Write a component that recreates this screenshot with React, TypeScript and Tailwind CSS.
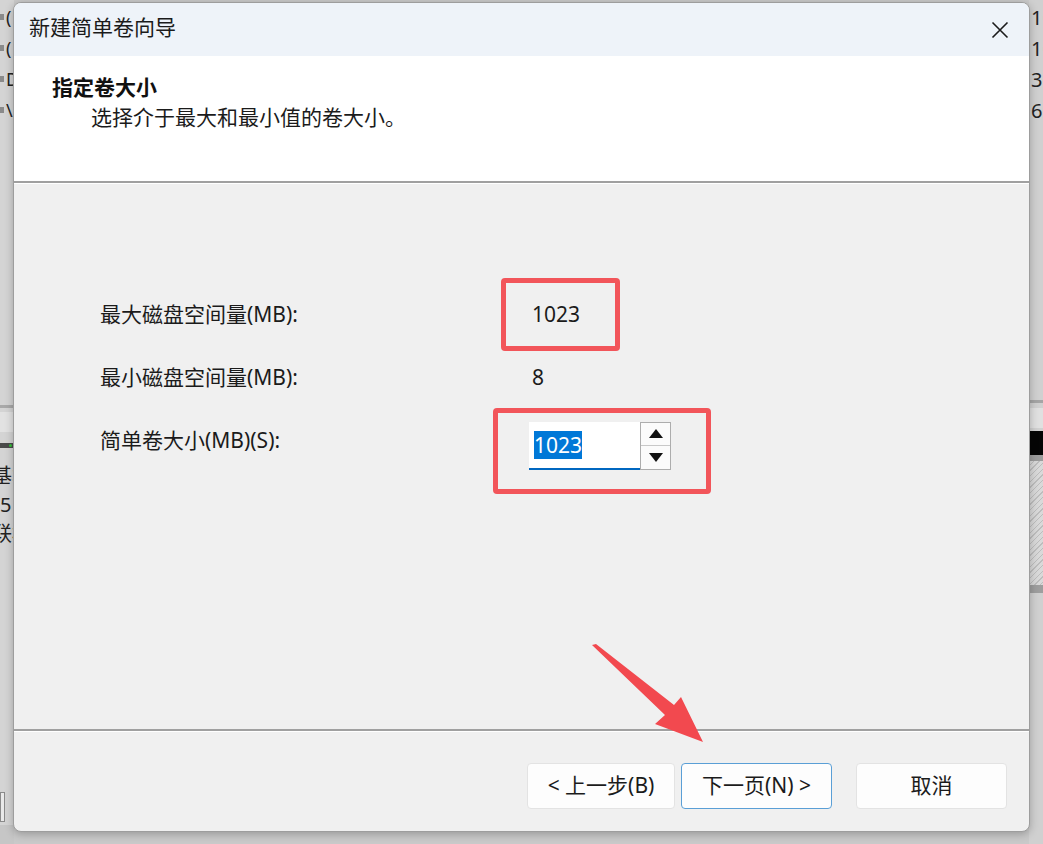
import React from "react";

const font = "font-['Noto_Sans','Noto_Sans_CJK_SC',sans-serif]";

function BackdropLeft() {
  return (
    <div className="absolute inset-y-0 left-0 w-[14px] overflow-hidden whitespace-nowrap bg-[#d4d4d4] text-[18px] leading-none text-[#222]">
      <div className="absolute left-0 top-[8px] flex flex-col gap-[13px]">
        {["(", "(", "D", "\\"].map((c, i) => (
          <div key={i} className="flex h-[18px] items-center gap-[2px]">
            <span className="h-[6px] w-[4px] bg-[#8a8a8a]" />
            <span>{c}</span>
          </div>
        ))}
      </div>
      <div className="absolute left-0 top-[405px] h-[3px] w-full bg-[#a9a9a9]" />
      <div className="absolute left-0 top-[412px] h-[20px] w-full bg-[#e2e2e2]" />
      <div className="absolute left-0 top-[443px] h-[5px] w-full bg-[#4a4a4a]">
        <span className="absolute right-[2px] top-[1px] h-[3px] w-[3px] rounded-full bg-[#35c23a]" />
      </div>
      <div className="absolute left-[-8px] top-[466px] flex w-[60px] flex-col gap-[9px] text-[20px]">
        <span>基本</span>
        <span className="pl-[8px]">5</span>
        <span>联机</span>
      </div>
      <div className="absolute left-0 top-[792px] h-[30px] w-[5px] border border-[#8a8a8a] bg-[#e9e9e9]" />
      <div className="absolute left-0 top-[825px] h-[19px] w-full bg-[#c6c6c6]" />
    </div>
  );
}

function BackdropRight() {
  return (
    <div className="absolute inset-y-0 right-0 w-[14px] overflow-hidden whitespace-nowrap bg-[#d0d0d0] text-[20px] leading-none text-[#222]">
      <div className="absolute left-[2px] top-[8px] flex w-[40px] flex-col gap-[13px]">
        <span className="h-[18px]">1<span className="text-[#c47a1a]">0</span></span>
        <span className="h-[18px]">1<span className="text-[#c47a1a]">0</span></span>
        <span className="h-[18px]">3</span>
        <span className="h-[18px]">6</span>
      </div>
      <div className="absolute left-0 top-[400px] h-[3px] w-full bg-[#a5a5a5]" />
      <div className="absolute left-0 top-[408px] h-[20px] w-full bg-[#e0e0e0]" />
      <div className="absolute left-0 top-[431px] h-[24px] w-full bg-[#050505]" />
      <div className="absolute left-0 top-[455px] h-[6px] w-full bg-[#9c9c9c]" />
      <div className="absolute left-0 top-[461px] h-[124px] w-full bg-[repeating-linear-gradient(135deg,#d9d9d9_0px,#d9d9d9_3px,#bdbdbd_3px,#bdbdbd_4px)]" />
      <div className="absolute left-0 top-[585px] h-[8px] w-full bg-[#9e9e9e]" />
    </div>
  );
}

function Arrow() {
  return (
    <svg className="pointer-events-none absolute left-0 top-0" width="1043" height="844" viewBox="0 0 1043 844">
      <polygon
        points="592,645 596,644 674,705 681,697 703,742 655,724 665,715"
        fill="#f2494f"
      />
    </svg>
  );
}

function Spinner() {
  return (
    <div className="flex h-[48px] w-[31px] flex-col border border-[#adadad] bg-[#f0f0f0]">
      <div className="flex flex-1 items-center justify-center border-b border-[#c8c8c8] bg-[#fbfbfb]">
        <svg width="14" height="9" viewBox="0 0 14 9"><polygon points="7,0 14,9 0,9" fill="#111" /></svg>
      </div>
      <div className="flex flex-1 items-center justify-center bg-[#fbfbfb]">
        <svg width="14" height="9" viewBox="0 0 14 9"><polygon points="0,0 14,0 7,9" fill="#111" /></svg>
      </div>
    </div>
  );
}

export default function App() {
  return (
    <div className={`relative h-[844px] w-[1043px] overflow-hidden bg-[#c9c9c9] ${font}`}>
      <BackdropLeft />
      <BackdropRight />

      <div className="relative ml-[13px] mt-[2px] flex h-[830px] w-[1017px] flex-col overflow-hidden rounded-[8px] border border-[#9d9d9d] bg-[#f0f0f0] shadow-[0_2px_8px_rgba(0,0,0,0.25)]">
        {/* title bar */}
        <div className="flex h-[53px] shrink-0 items-center justify-between bg-[#eef3f9] pl-[15px] pr-[18px]">
          <span className="pb-[3px] text-[21px] text-[#1b1b1b]">新建简单卷向导</span>
          <svg width="18" height="18" viewBox="0 0 18 18" className="mr-[2px]">
            <path d="M1.5 1.5 L16.5 16.5 M16.5 1.5 L1.5 16.5" stroke="#1b1b1b" strokeWidth="1.6" />
          </svg>
        </div>

        {/* header */}
        <div className="flex h-[125px] shrink-0 flex-col bg-white pl-[38px] pt-[17px]">
          <span className="text-[21px] font-bold leading-[29px] text-[#111]">指定卷大小</span>
          <span className="pl-[39px] text-[21px] leading-[30px] text-[#1b1b1b]">选择介于最大和最小值的卷大小。</span>
        </div>
        <div className="h-[2px] shrink-0 bg-[#a0a0a0]" />
        <div className="h-[1px] shrink-0 bg-white" />

        {/* body */}
        <div className="relative flex flex-1 flex-col pl-[86px] pt-[99px] text-[21px] text-[#1b1b1b]">
          <div className="flex h-[63px] items-center">
            <span className="w-[432px]">最大磁盘空间量(MB):</span>
            <span>1023</span>
          </div>
          <div className="flex h-[63px] items-center">
            <span className="w-[432px]">最小磁盘空间量(MB):</span>
            <span>8</span>
          </div>
          <div className="flex h-[63px] items-center">
            <span className="w-[429px]">简单卷大小(MB)(S):</span>
            <div className="mt-[10px] flex">
              <div className="flex h-[48px] w-[111px] items-center border-b-2 border-[#0067c0] bg-white pl-[5px]">
                <span className="bg-[#0078d7] leading-[28px] text-white">1023</span>
              </div>
              <Spinner />
            </div>
          </div>
        </div>

        {/* footer */}
        <div className="h-[2px] shrink-0 bg-[#a0a0a0]" />
        <div className="h-[1px] shrink-0 bg-white" />
        <div className="flex h-[99px] shrink-0 items-start justify-end pr-[22px] pt-[31px] text-[21px] text-[#1b1b1b]">
          <button className="flex h-[46px] w-[148px] items-center justify-center rounded-[4px] border border-[#e3e3e3] bg-[#fdfdfd]">
            &lt; 上一步(B)
          </button>
          <button className="ml-[6px] flex h-[46px] w-[151px] items-center justify-center rounded-[4px] border border-[#5a9fd6] bg-[#fdfdfd]">
            下一页(N) &gt;
          </button>
          <button className="ml-[24px] flex h-[46px] w-[151px] items-center justify-center rounded-[4px] border border-[#e3e3e3] bg-[#fdfdfd]">
            取消
          </button>
        </div>
      </div>

      {/* annotations */}
      <div className="pointer-events-none absolute left-[501px] top-[278px] h-[73px] w-[119px] rounded-[4px] border-[5px] border-[#f2555a]" />
      <div className="pointer-events-none absolute left-[493px] top-[408px] h-[86px] w-[218px] rounded-[4px] border-[5px] border-[#f2555a]" />
      <Arrow />
    </div>
  );
}
